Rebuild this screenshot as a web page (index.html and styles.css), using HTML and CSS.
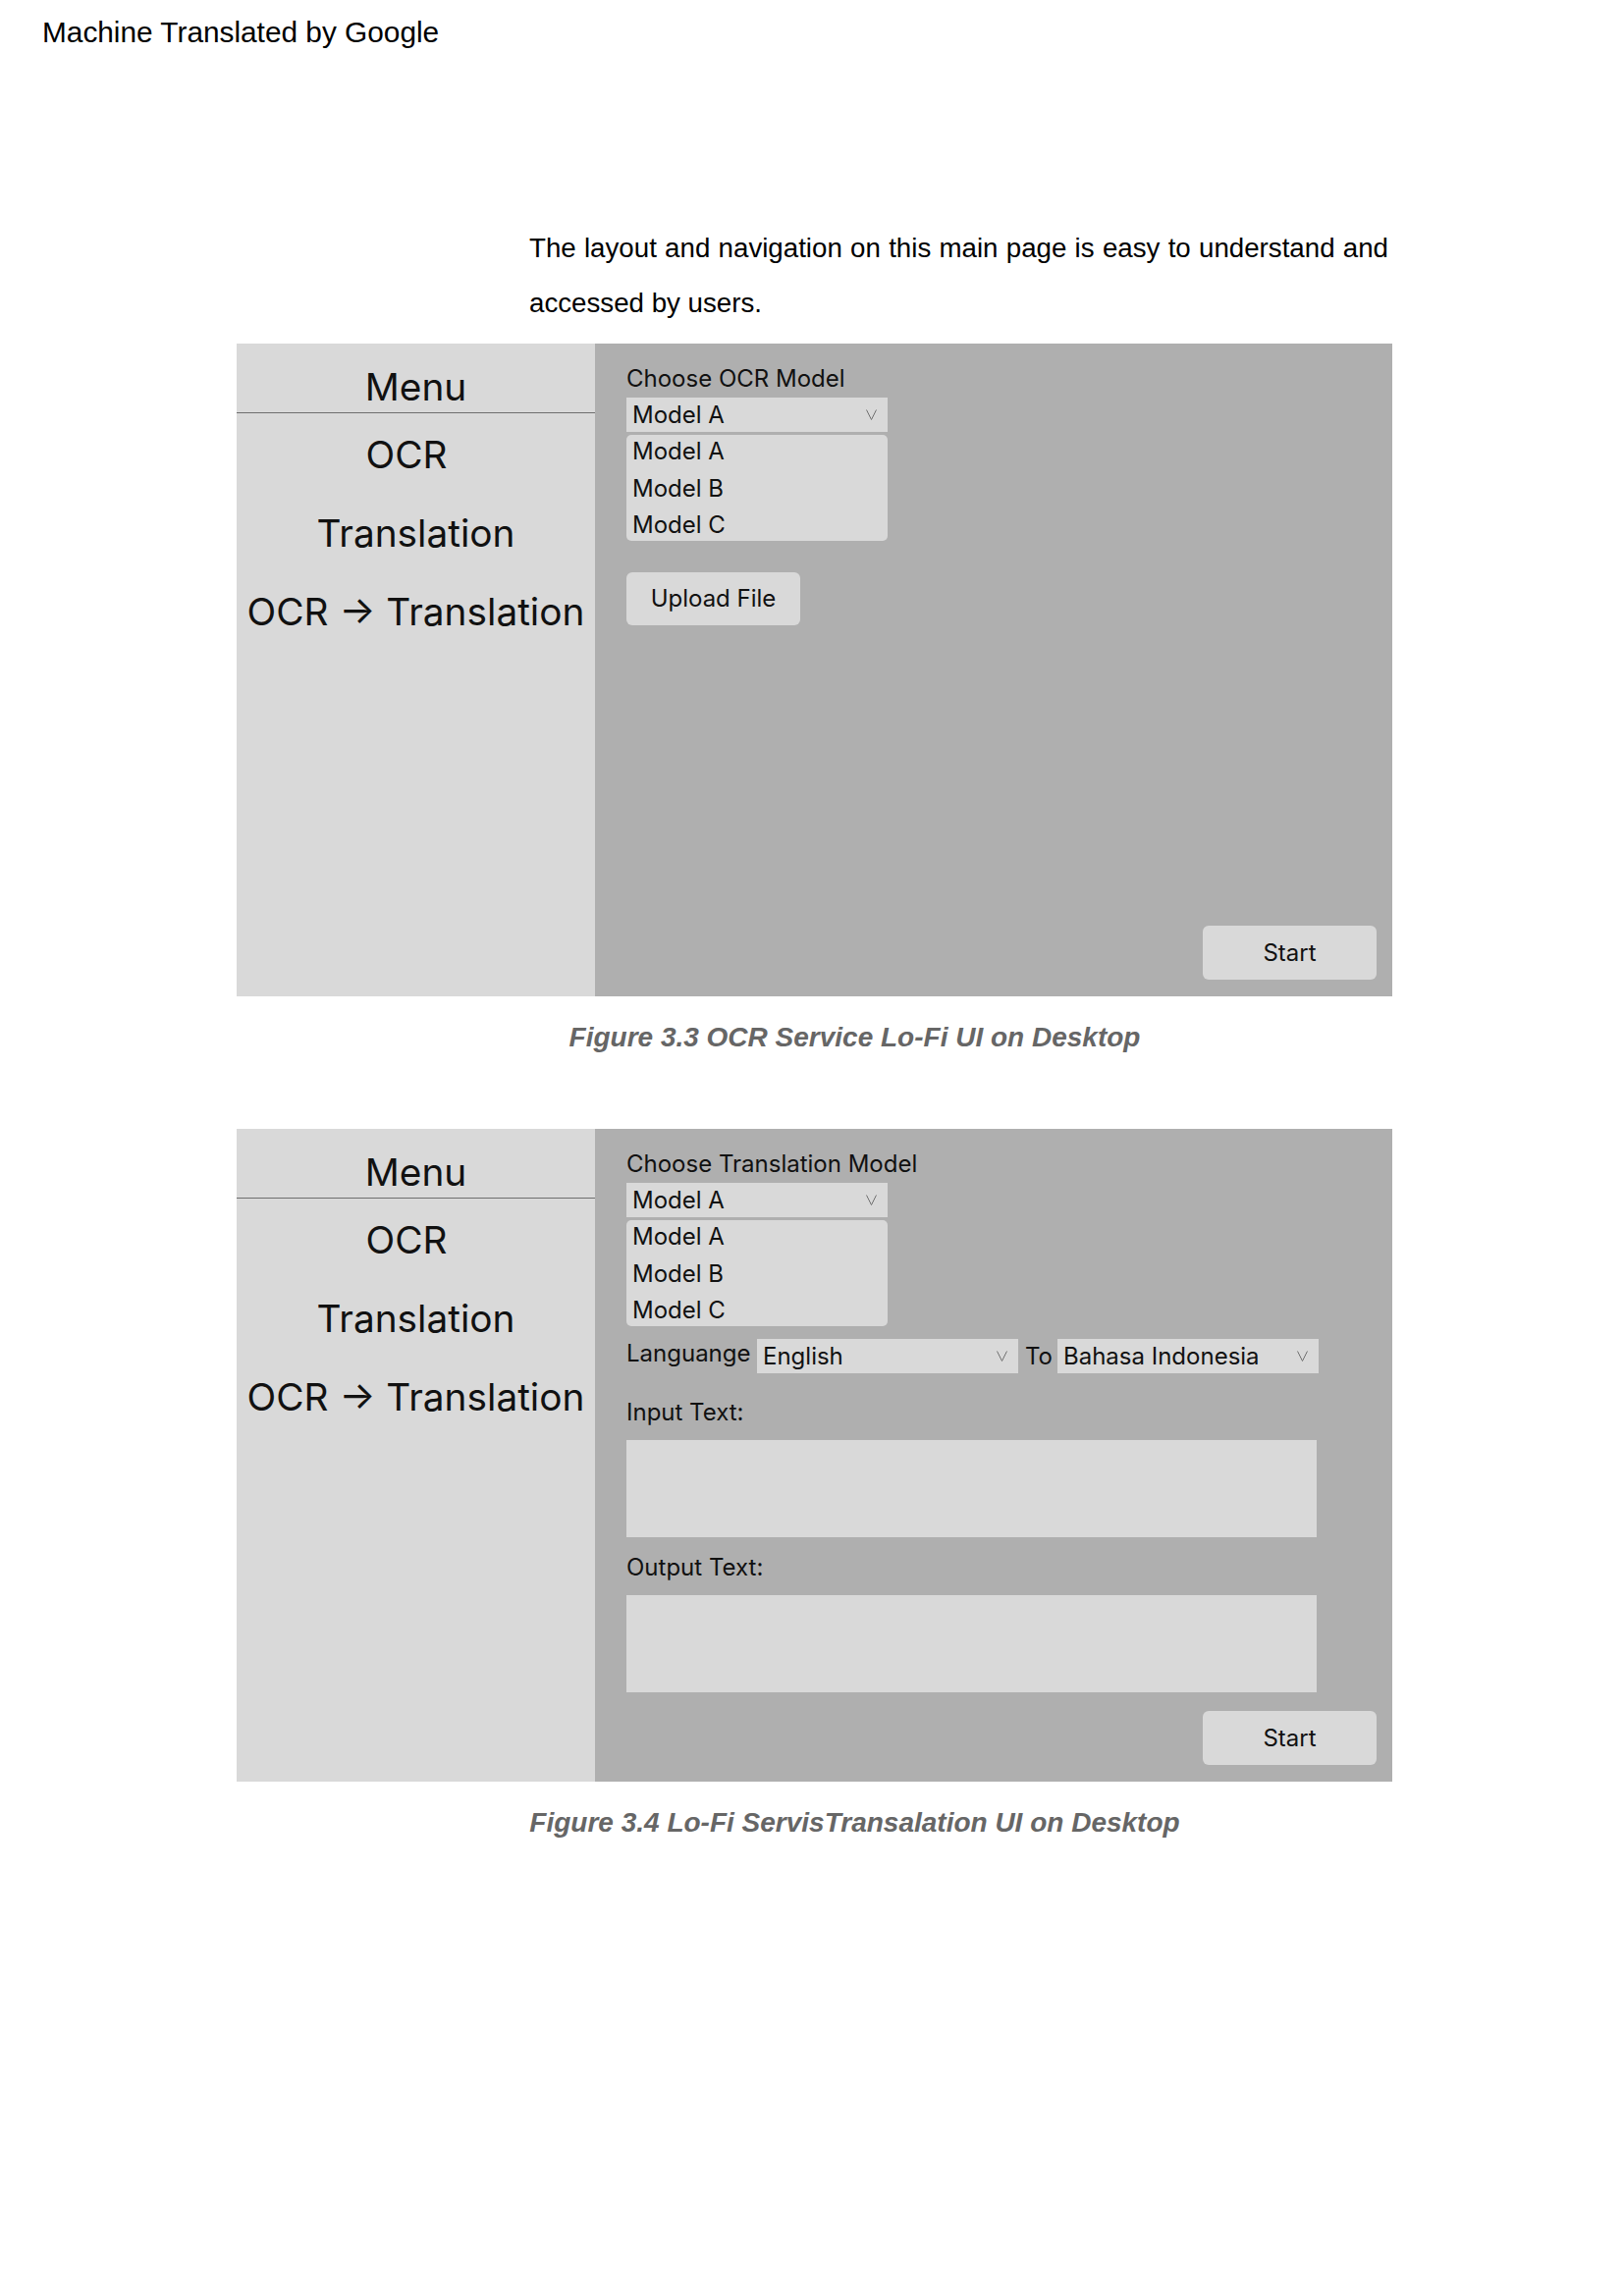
FILE: index.html
```html
<!DOCTYPE html>
<html lang="en">
<head>
<meta charset="utf-8">
<title>Lo-Fi UI on Desktop</title>
<link rel="stylesheet" href="styles.css">
</head>
<body>
<header class="mt-header">Machine Translated by Google</header>

<p class="intro">
  <span class="intro-line intro-line-full">The layout and navigation on this main page is easy to understand and</span>
  <span class="intro-line">accessed by users.</span>
</p>

<section class="figure">
  <div class="mockup">
    <aside class="sidebar">
      <div class="menu-title">Menu</div>
      <nav class="menu-nav">
        <div class="menu-item menu-item-ocr">OCR</div>
        <div class="menu-item">Translation</div>
        <div class="menu-item">OCR → Translation</div>
      </nav>
    </aside>
    <main class="panel">
      <div class="field-label">Choose OCR Model</div>
      <div class="select">
        <span>Model A</span>
        <svg class="chev" width="11" height="11" viewBox="0 0 11 11"><polyline points="0.5,0.5 5.5,10.5 10.5,0.5" fill="none" stroke="#707070" stroke-width="1"/></svg>
      </div>
      <ul class="options">
        <li>Model A</li>
        <li>Model B</li>
        <li>Model C</li>
      </ul>
      <div class="btn btn-upload">Upload File</div>
      <div class="btn btn-start">Start</div>
    </main>
  </div>
  <p class="caption">Figure 3.3 OCR Service Lo-Fi UI on Desktop</p>
</section>

<section class="figure figure-second">
  <div class="mockup">
    <aside class="sidebar">
      <div class="menu-title">Menu</div>
      <nav class="menu-nav">
        <div class="menu-item menu-item-ocr">OCR</div>
        <div class="menu-item">Translation</div>
        <div class="menu-item">OCR → Translation</div>
      </nav>
    </aside>
    <main class="panel">
      <div class="field-label">Choose Translation Model</div>
      <div class="select">
        <span>Model A</span>
        <svg class="chev" width="11" height="11" viewBox="0 0 11 11"><polyline points="0.5,0.5 5.5,10.5 10.5,0.5" fill="none" stroke="#707070" stroke-width="1"/></svg>
      </div>
      <ul class="options">
        <li>Model A</li>
        <li>Model B</li>
        <li>Model C</li>
      </ul>
      <div class="lang-row">
        <span class="lang-label">Languange</span>
        <div class="select select-lang">
          <span>English</span>
          <svg class="chev" width="11" height="11" viewBox="0 0 11 11"><polyline points="0.5,0.5 5.5,10.5 10.5,0.5" fill="none" stroke="#707070" stroke-width="1"/></svg>
        </div>
        <span class="to-label">To</span>
        <div class="select select-lang">
          <span>Bahasa Indonesia</span>
          <svg class="chev" width="11" height="11" viewBox="0 0 11 11"><polyline points="0.5,0.5 5.5,10.5 10.5,0.5" fill="none" stroke="#707070" stroke-width="1"/></svg>
        </div>
      </div>
      <div class="field-label text-label">Input Text:</div>
      <div class="textbox"></div>
      <div class="field-label text-label text-label-out">Output Text:</div>
      <div class="textbox"></div>
      <div class="btn btn-start">Start</div>
    </main>
  </div>
  <p class="caption">Figure 3.4 Lo-Fi ServisTransalation UI on Desktop</p>
</section>
</body>
</html>
```

FILE: styles.css
```css
html, body {
  margin: 0;
  padding: 0;
  background: #ffffff;
}

body {
  width: 1653px;
  min-height: 2339px;
  font-family: "Liberation Sans", Arial, sans-serif;
  color: #000;
}

.mt-header {
  padding: 16px 0 0 43px;
  font-size: 29.8px;
  line-height: 34px;
  height: 34px;
}

.intro {
  margin: 175px 0 0 539px;
  width: 875px;
  font-size: 27.7px;
  line-height: 55.5px;
}

.intro-line {
  display: block;
  white-space: nowrap;
}

.intro-line-full {
  text-align: justify;
  text-align-last: justify;
}

.figure {
  margin: 14px 0 0 241px;
  width: 1177px;
}

.figure-second {
  margin-top: 77px;
}

.mockup {
  display: grid;
  grid-template-columns: 365px 1fr;
  height: 665px;
  font-family: Inter, "Noto Sans", sans-serif;
  color: #111;
}

.sidebar {
  background: #d9d9d9;
  display: flex;
  flex-direction: column;
  text-align: center;
}

.menu-title {
  padding: 20px 0 3px;
  font-size: 38.8px;
  line-height: 47px;
  border-bottom: 1px solid #6e6e6e;
}

.menu-nav {
  padding-top: 2px;
}

.menu-item {
  font-size: 38.8px;
  line-height: 80px;
  white-space: nowrap;
}

.menu-item-ocr {
  padding-right: 19px;
}

.panel {
  background: #afafaf;
  display: flex;
  flex-direction: column;
  align-items: flex-start;
  padding: 21px 0 0 32px;
  font-size: 24px;
}

.field-label {
  line-height: 29px;
  white-space: nowrap;
}

.select {
  box-sizing: border-box;
  width: 266px;
  height: 35px;
  margin-top: 5px;
  padding: 0 11px 0 6px;
  background: #d9d9d9;
  display: flex;
  align-items: center;
  justify-content: space-between;
  line-height: 35px;
  white-space: nowrap;
}

.chev {
  display: block;
  flex: none;
}

.options {
  list-style: none;
  box-sizing: border-box;
  width: 266px;
  height: 108px;
  margin: 3px 0 0;
  padding: 0 0 0 6px;
  background: #d9d9d9;
  border-radius: 5px;
}

.options li {
  line-height: 37.5px;
}

.options li:first-child {
  margin-top: -2px;
}

.btn {
  box-sizing: border-box;
  width: 177px;
  background: #d9d9d9;
  border-radius: 6px;
  text-align: center;
}

.btn-upload {
  margin-top: 32px;
  height: 54px;
  line-height: 54px;
}

.btn-start {
  margin-top: auto;
  margin-bottom: 17px;
  margin-right: 16px;
  align-self: flex-end;
  height: 55px;
  line-height: 55px;
}

.lang-row {
  display: flex;
  align-items: flex-start;
  margin-top: 13px;
}

.lang-row .select-lang {
  margin-top: 0;
}

.lang-label {
  width: 133px;
  line-height: 29px;
}

.to-label {
  box-sizing: border-box;
  width: 40px;
  padding-left: 7px;
  line-height: 35px;
}

.text-label {
  margin-top: 25px;
}

.text-label-out {
  margin-top: 16px;
}

.textbox {
  width: 703px;
  height: 99px;
  margin-top: 14px;
  background: #d9d9d9;
}

.caption {
  margin: 25px 0 0;
  padding-left: 82px;
  text-align: center;
  font-size: 28px;
  line-height: 33px;
  font-weight: bold;
  font-style: italic;
  color: #666666;
}
```
